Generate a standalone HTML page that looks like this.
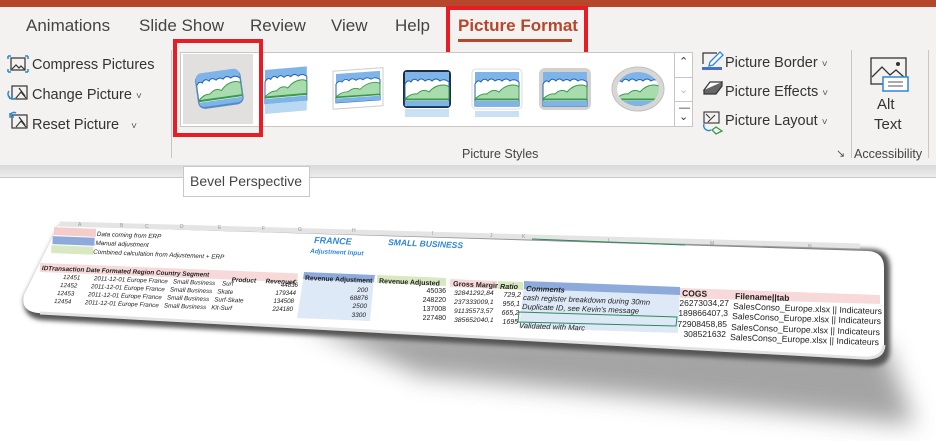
<!DOCTYPE html>
<html><head><meta charset="utf-8"><style>
*{margin:0;padding:0;box-sizing:border-box}
body{width:936px;height:441px;overflow:hidden;background:#fff;font-family:"Liberation Sans",sans-serif;position:relative}
.a{position:absolute;white-space:nowrap}
.tab{font-size:17px;color:#444;top:16px}
.btn{font-size:14.5px;color:#333}
.chev{font-size:10px;color:#555}
</style></head><body>
<div class="a" style="left:0;top:0;width:936px;height:7px;background:#b7472a"></div>
<div class="a" style="left:0;top:7px;width:936px;height:158px;background:#f3f2f1"></div>
<div class="a" style="left:0;top:165px;width:936px;height:12px;background:linear-gradient(#d9d9d9,#ececec)"></div>
<div class="a" style="left:0;top:177px;width:936px;height:1px;background:#c8c8c8"></div>

<div class="a tab" style="left:26px">Animations</div>
<div class="a tab" style="left:139px">Slide Show</div>
<div class="a tab" style="left:250px">Review</div>
<div class="a tab" style="left:331px">View</div>
<div class="a tab" style="left:395px">Help</div>
<div class="a tab" style="left:458px;color:#b7472a;font-weight:bold">Picture Format</div>
<div class="a" style="left:458px;top:39px;width:114px;height:3px;background:#b7472a"></div>
<div class="a" style="left:446px;top:6px;width:142px;height:55px;border:4px solid #e81c24"></div>

<svg class="a" style="left:7px;top:55px" width="22" height="86" viewBox="0 0 22 86">
 <g fill="none" stroke="#333" stroke-width="1.2">
  <rect x="4" y="3" width="14" height="12"/><path d="M5 14l4-4 3 3 2-2 4 4"/>
  <rect x="5" y="31" width="15" height="13"/><path d="M9 43l5-6 5 6M12 33l6 8"/>
  <rect x="5" y="60" width="15" height="13"/><path d="M9 72l5-6 5 6M12 62l6 8"/>
 </g>
 <g stroke="#2b88d8" stroke-width="1.5" fill="none">
  <path d="M1 1h3M1 1v3M21 1h-3M21 1v3M1 17h3M1 17v-3M21 17h-3M21 17v-3"/>
  <path d="M2 36a5 5 0 0 0 7 7M3 44l-1-3"/>
  <path d="M3 62a4 4 0 0 1 6-4M3 58v4h4"/>
 </g>
</svg>
<div class="a btn" style="left:32px;top:57px">Compress Pictures</div>
<div class="a btn" style="left:32px;top:87px">Change Picture <span class="chev">&#709;</span></div>
<div class="a btn" style="left:32px;top:117px">Reset Picture &nbsp;&nbsp;<span class="chev">&#709;</span></div>
<div class="a" style="left:171px;top:50px;width:1px;height:108px;background:#c8c6c4"></div>

<div class="a" style="left:180px;top:52px;width:495px;height:75px;background:#fff;border:1px solid #c8c6c4"></div>
<div class="a" style="left:183px;top:54px;width:70px;height:70px;background:#e1e0df"></div>
<div class="a" style="left:674px;top:52px;width:19px;height:75px;background:#fff;border:1px solid #c8c6c4"></div>
<div class="a" style="left:674px;top:77px;width:19px;height:25px;border-top:1px solid #c8c6c4;border-bottom:1px solid #c8c6c4"></div>
<div class="a" style="left:679px;top:55px;font-size:11px;color:#333">&#8963;</div>
<div class="a" style="left:679px;top:83px;font-size:11px;color:#bbb">&#8964;</div>
<div class="a" style="left:679px;top:104px;font-size:11px;color:#333;line-height:9px">&#8212;<br>&#8964;</div>
<svg class="a" style="left:180px;top:52px" width="495" height="75" viewBox="0 0 495 75">
 <defs>
  <g id="pic">
   <rect x="0" y="0" width="44" height="34" fill="#7fb4e8"/>
   <path d="M0 12q3-5 6-2q3-5 7-1q3-4 7 0q4-3 7 0q4-4 8 0q4-3 9 1v24H0z" fill="#fff" stroke="#1f62b0" stroke-width="1"/>
   <path d="M0 27q6-6 12-5q6-6 12-2q6-7 14-7q4 0 6 2v12H0z" fill="#a8dcae" stroke="#3a9a4a" stroke-width="1"/>
   <rect x="0" y="27" width="44" height="1.5" fill="#3a9a4a"/>
   <rect x="0" y="29" width="44" height="5" fill="#7fb4e8"/>
  </g>
  <clipPath id="rr"><rect x="0" y="0" width="44" height="34" rx="6"/></clipPath>
 </defs>
 <g transform="translate(15,22) rotate(-8)"><rect x="-1" y="1" width="46" height="35" rx="7" fill="#5a8cc4"/><g clip-path="url(#rr)"><use href="#pic"/></g></g>
 <g transform="translate(85,18) skewY(-5) scale(0.95,1)"><use href="#pic"/><rect x="0" y="34" width="44" height="10" fill="#b9d8f2"/></g>
 <g transform="translate(156,22) skewY(-4)"><rect x="-3" y="-3" width="50" height="38" fill="#fff" stroke="#ccc"/><use href="#pic" transform="scale(1,0.85)"/></g>
 <g transform="translate(225,20)"><rect x="-2" y="-2" width="48" height="38" rx="4" fill="#1d2f44"/><use href="#pic"/><rect x="0" y="37" width="44" height="8" fill="#c9e0f5"/></g>
 <g transform="translate(295,20)"><rect x="-3" y="-3" width="50" height="40" rx="4" fill="#fff" stroke="#ddd"/><use href="#pic"/><rect x="0" y="39" width="44" height="6" fill="#c9e0f5"/></g>
 <g transform="translate(363,20)"><rect x="-4" y="-4" width="52" height="42" rx="6" fill="#d2d1d0"/><use href="#pic"/></g>
 <g transform="translate(434,16)"><ellipse cx="24" cy="21" rx="26" ry="22" fill="#d8d7d6" stroke="#c0c0c0"/><clipPath id="ec"><ellipse cx="24" cy="21" rx="21" ry="17"/></clipPath><g clip-path="url(#ec)"><use href="#pic" transform="translate(2,4)"/></g></g>
</svg>
<div class="a" style="left:173px;top:39px;width:90px;height:98px;border:4px solid #e81c24"></div>
<div class="a" style="left:462px;top:147px;font-size:12.5px;color:#444">Picture Styles</div>
<div class="a" style="left:836px;top:147px;font-size:11px;color:#555">&#8600;</div>

<svg class="a" style="left:701px;top:50px" width="24" height="90" viewBox="0 0 24 90">
 <path d="M2 14V3h14" fill="none" stroke="#333" stroke-width="1.2"/>
 <path d="M9 12l10-10 3 3-10 10-4 1z" fill="#fff" stroke="#2b88d8" stroke-width="1.3"/>
 <rect x="1" y="17" width="20" height="3" fill="#4472c4"/>
 <path d="M3 40l6-8h12l-6 8z" fill="#fff" stroke="#333" stroke-width="1.2"/><path d="M3 40v4h12l6-8v-4" fill="#666" stroke="#333" stroke-width="1.2"/>
 <rect x="3" y="62" width="15" height="11" fill="none" stroke="#333" stroke-width="1.1"/><path d="M7 72l7-7M5 64l4 4" stroke="#333"/>
 <path d="M3 74a5 5 0 0 0 7 6" fill="none" stroke="#2b88d8" stroke-width="1.4"/><path d="M11 80l4-3 6 4-6 3z" fill="none" stroke="#3a9a4a" stroke-width="1.3"/>
</svg>
<div class="a btn" style="left:725px;top:55px">Picture Border <span class="chev">&#709;</span></div>
<div class="a btn" style="left:725px;top:84px">Picture Effects <span class="chev">&#709;</span></div>
<div class="a btn" style="left:725px;top:113px">Picture Layout <span class="chev">&#709;</span></div>
<div class="a" style="left:851px;top:50px;width:1px;height:108px;background:#c8c6c4"></div>
<svg class="a" style="left:870px;top:57px" width="42" height="36" viewBox="0 0 42 36">
 <rect x="1" y="1" width="35" height="26" fill="none" stroke="#333" stroke-width="1.3"/>
 <path d="M2 20l10-10 8 8 6-5 9 8" fill="none" stroke="#333" stroke-width="1.3"/><circle cx="28" cy="7" r="2" fill="#333"/>
 <rect x="13" y="20" width="25" height="14" fill="#fff" stroke="#2b88d8" stroke-width="1.5"/>
 <path d="M18 25h15M18 29h15" stroke="#555"/>
</svg>
<div class="a" style="left:877px;top:96px;font-size:15px;color:#333">Alt</div>
<div class="a" style="left:874px;top:116px;font-size:15px;color:#333">Text</div>
<div class="a" style="left:854px;top:147px;font-size:12.5px;color:#444">Accessibility</div>
<div class="a" style="left:928px;top:50px;width:1px;height:108px;background:#c8c6c4"></div>

<div class="a" style="left:183px;top:166px;width:127px;height:31px;background:#fff;border:1px solid #c8c8c8"></div>
<div class="a" style="left:190px;top:173px;font-size:14px;color:#444">Bevel Perspective</div>

<svg class="a" style="left:0;top:0" width="936" height="441" viewBox="0 0 936 441">
 <defs><filter id="bl" x="-20%" y="-50%" width="140%" height="200%"><feGaussianBlur stdDeviation="12"/></filter>
 <filter id="b2"><feGaussianBlur stdDeviation="2.5"/></filter></defs>
 <path d="M300 322 L885 345 L915 425 L420 375 Z" fill="#8e8e8e" opacity="0.8" filter="url(#bl)"/>
 <path d="M24 298 Q22 318 42 320 L868 366 Q890 368 890 350 L890 268 Q890 250 872 249 L60 226 Z" fill="#555" filter="url(#b2)"/>
 <path d="M24 295 Q20 311 38 313 L864 358 Q883 359 884 345 L884 268 Q884 252 868 251 L58 226 Z" fill="#fff"/>
 <path d="M40 313 L864 358 Q883 359 884 345" fill="none" stroke="#e2e2e2" stroke-width="3"/>
 <g font-family="Liberation Sans,sans-serif" fill="#555" font-size="5">
  <line x1="60" y1="224" x2="860" y2="246" stroke="#e4e4e4" stroke-width="5"/>
  <g fill="#999"><text x="78" y="226">A</text><text x="120" y="227">B</text><text x="145" y="228">C</text><text x="180" y="228">D</text><text x="218" y="229">E</text><text x="262" y="230">F</text><text x="298" y="231">G</text><text x="352" y="232">H</text><text x="432" y="235">I</text><text x="490" y="237">J</text><text x="522" y="238">K</text><text x="608" y="242">L</text><text x="710" y="245">M</text><text x="808" y="248">N</text></g>
  <line x1="532" y1="239" x2="685" y2="245" stroke="#2e8b57" stroke-width="1"/>
 </g>
 <g font-family="Liberation Sans,sans-serif" font-style="italic" fill="#222">
  <g transform="rotate(2.3 50 230)">
   <rect x="54" y="227" width="42" height="8" fill="#f4cccc"/>
   <rect x="53" y="236" width="42" height="8" fill="#8eaadb"/>
   <rect x="52" y="245" width="42" height="8" fill="#d8e8c0"/>
   <text x="97" y="234" font-size="6.3">Data coming from ERP</text>
   <text x="96" y="243" font-size="6.3">Manual adjustment</text>
   <text x="94" y="252" font-size="6.3">Combined calculation from Adjustement + ERP</text>
  </g>
  <text x="314" y="243" font-size="9" font-weight="bold" fill="#2f87d8" transform="rotate(2.5 314 243)">FRANCE</text>
  <text x="310" y="253" font-size="6.5" font-weight="bold" fill="#2f87d8" transform="rotate(2.5 310 253)">Adjustment Input</text>
  <text x="388" y="245" font-size="8.5" font-weight="bold" fill="#2f87d8" transform="rotate(2.5 388 245)">SMALL BUSINESS</text>
 </g>
 <g font-family="Liberation Sans,sans-serif" fill="#222">
  <g transform="rotate(2.3 40 265)">
   <rect x="40" y="263" width="258" height="9" fill="#f8d9d9"/>
   <text x="42" y="270" font-size="6.4" font-weight="bold" font-style="italic">IDTransaction Date Formated Region Country Segment</text>
   <text x="232" y="274" font-size="6.5" font-weight="bold" font-style="italic">Product</text>
   <text x="266" y="274" font-size="6.5" font-weight="bold" font-style="italic">Revenue€</text>
  </g>
  <g font-size="6.2" font-style="italic">
   <text x="63" y="279" transform="rotate(2.3 63 279)">12451 &#160;&#160;&#160;&#160;&#160;&#160; 2011-12-01 Europe France &#160; Small Business &#160; &#160;Surf</text>
   <text x="60" y="287" transform="rotate(2.3 60 287)">12452 &#160;&#160;&#160;&#160;&#160;&#160; 2011-12-01 Europe France &#160; Small Business &#160; Skate</text>
   <text x="57" y="295" transform="rotate(2.3 57 295)">12453 &#160;&#160;&#160;&#160;&#160;&#160; 2011-12-01 Europe France &#160; Small Business &#160; Surf-Skate</text>
   <text x="54" y="303" transform="rotate(2.3 54 303)">12454 &#160;&#160;&#160;&#160;&#160;&#160; 2011-12-01 Europe France &#160; Small Business &#160; Kit-Surf</text>
   <g text-anchor="end"><text x="298" y="287">44836</text><text x="296" y="295">179344</text><text x="294" y="303">134508</text><text x="293" y="311">224180</text></g>
  </g>
  <path d="M304 275 L374 278 L370 321 L297 318 Z" fill="#dde9f6"/>
  <path d="M304 272 L375 275 L374 282 L303 279 Z" fill="#8eaadb"/>
  <text x="305" y="280" font-size="6.8" font-weight="bold" transform="rotate(2.5 305 280)">Revenue Adjustment</text>
  <g font-size="6.5" font-style="italic" text-anchor="end"><text x="368" y="292">200</text><text x="368" y="300">68876</text><text x="367" y="308">2500</text><text x="366" y="317">3300</text></g>
  <path d="M377 275 L446 278 L446 286 L377 283 Z" fill="#d8e8c0"/>
  <text x="379" y="283" font-size="7" font-weight="bold" transform="rotate(2.5 379 283)">Revenue Adjusted</text>
  <path d="M450 279 L497 281 L497 289 L450 287 Z" fill="#f8d9d9"/>
  <text x="453" y="286" font-size="7.2" font-weight="bold" transform="rotate(2.5 453 286)">Gross Margin</text>
  <path d="M498 281 L523 282 L523 290 L498 289 Z" fill="#d8e8c0"/>
  <text x="500" y="289" font-size="7.2" font-weight="bold" font-style="italic">Ratio</text>
  <g font-size="7" text-anchor="end"><text x="446" y="293">45036</text><text x="446" y="302">248220</text><text x="446" y="311">137008</text><text x="446" y="320">227480</text></g>
  <g font-size="6.8" font-style="italic"><text x="454" y="295">32841292,84</text><text x="454" y="304">237333009,1</text><text x="454" y="313">91135573,57</text><text x="454" y="322">385652040,1</text></g>
  <g font-size="7" font-style="italic" text-anchor="end"><text x="521" y="297">729,2</text><text x="520" y="306">956,1</text><text x="519" y="315">665,2</text><text x="518" y="324">1695</text></g>
  <path d="M524 283 L680 288 L678 333 L519 328 Z" fill="#dde9f6"/>
  <path d="M524 281 L680 287 L680 295 L524 289 Z" fill="#8eaadb"/>
  <text x="526" y="291" font-size="7.5" font-weight="bold" font-style="italic" transform="rotate(2.2 526 291)">Comments</text>
  <g font-size="7.6" font-style="italic">
   <text x="523" y="300" transform="rotate(2.2 523 300)">cash register breakdown during 30mn</text>
   <text x="522" y="309" transform="rotate(2.2 522 309)">Duplicate ID, see Kevin's message</text>
   <text x="519" y="328" transform="rotate(2.2 519 328)">Validated with Marc</text>
  </g>
  <path d="M519 312 L677 317 L676 326 L518 322 Z" fill="none" stroke="#2e8b57" stroke-width="1"/>
  <path d="M680 288 L880 295 L880 304 L680 298 Z" fill="#f8d9d9"/>
  <text x="682" y="296" font-size="8.5" font-weight="bold" transform="rotate(2 682 296)">COGS</text>
  <text x="735" y="299" font-size="8.5" font-weight="bold" transform="rotate(2 735 299)">Filename||tab</text>
  <g font-size="8.5" text-anchor="end"><text x="729" y="306">26273034,27</text><text x="728" y="316">189866407,3</text><text x="727" y="327">72908458,85</text><text x="726" y="337">308521632</text></g>
  <g font-size="8.7">
   <text x="733" y="309" transform="rotate(2 733 309)">SalesConso_Europe.xlsx || Indicateurs</text>
   <text x="732" y="319" transform="rotate(2 732 319)">SalesConso_Europe.xlsx || Indicateurs</text>
   <text x="731" y="330" transform="rotate(2 731 330)">SalesConso_Europe.xlsx || Indicateurs</text>
   <text x="730" y="340" transform="rotate(2 730 340)">SalesConso_Europe.xlsx || Indicateurs</text>
  </g>
 </g>
</svg>
</body></html>
